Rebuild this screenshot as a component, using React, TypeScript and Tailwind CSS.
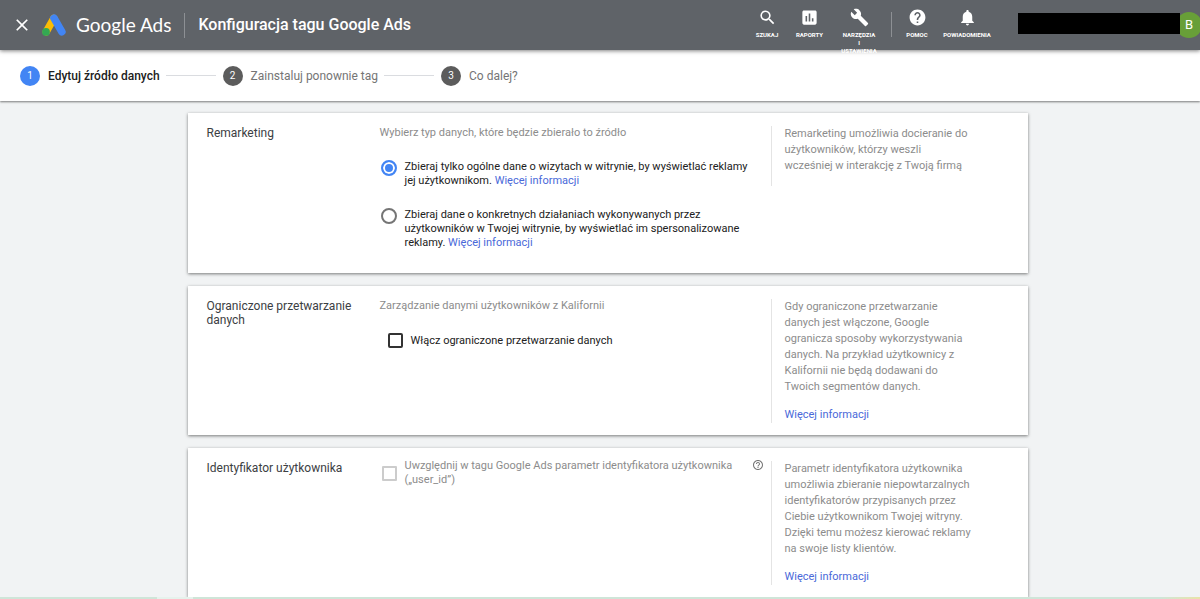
import type { ReactNode } from 'react';
import {
  MdAssessment,
  MdBuild,
  MdClose,
  MdHelp,
  MdHelpOutline,
  MdNotifications,
  MdSearch,
} from 'react-icons/md';

const steps = ['Edytuj źródło danych', 'Zainstaluj ponownie tag', 'Co dalej?'];

function AdsLogo() {
  return (
    <svg viewBox="0 0 24 22" className="h-[22px] w-6" aria-hidden="true">
      <path d="M4.2 17.8 11.8 4.4" stroke="#fbbc04" strokeWidth="7.4" strokeLinecap="round" />
      <path d="M12 4.2 19.9 17.8" stroke="#4285f4" strokeWidth="7.6" strokeLinecap="round" />
      <circle cx="4" cy="17.9" r="3.9" fill="#34a853" />
    </svg>
  );
}

function ToolButton({ icon, label, className }: { icon: ReactNode; label: string; className: string }) {
  return (
    <button
      type="button"
      className={`flex flex-col items-center gap-1 text-center text-[6px] leading-[8px] font-bold uppercase ${className}`}
    >
      {icon}
      <span>{label}</span>
    </button>
  );
}

function Link({ children }: { children: ReactNode }) {
  return (
    <a href="#" className="text-[#4a69d9]">
      {children}
    </a>
  );
}

function Card({ title, side, more, children }: { title: string; side: string; more?: boolean; children: ReactNode }) {
  return (
    <section className="grid grid-cols-[173px_1fr_257px] bg-white pt-[13px] pb-3 pl-[19px] shadow-[0_1px_3px_rgba(0,0,0,0.5)]">
      <h2 className="pr-5 text-[12px] leading-[14px] text-[#3c4043]">{title}</h2>
      <div className="text-[11px] leading-[14px] text-[#212121]">{children}</div>
      <aside className="min-h-[60px] self-start border-l border-[#e4e4e4] pl-[13px] text-[11px] leading-[16px] text-[#8c8c8c]">
        <p className="w-[187px]">{side}</p>
        {more && (
          <p className="pt-3">
            <Link>Więcej informacji</Link>
          </p>
        )}
      </aside>
    </section>
  );
}

const radioClass =
  'size-4 shrink-0 appearance-none rounded-full border-2 border-[#757575] bg-white checked:border-[#4285f4] checked:bg-[#4285f4] checked:shadow-[inset_0_0_0_2px_white]';

export default function App() {
  return (
    <div className="flex min-h-screen flex-col overflow-x-clip bg-[#f1f3f4] font-['Roboto',sans-serif]">
      <header className="relative z-10 flex h-[50px] items-center bg-[#5f6368] text-white shadow-[0_1px_4px_rgba(0,0,0,0.5)]">
        <button type="button" aria-label="Zamknij" className="ml-3">
          <MdClose className="size-5" />
        </button>
        <div className="ml-[10px] flex items-center gap-[10px]">
          <AdsLogo />
          <span className="font-['Lato',sans-serif] text-[19px] leading-6">Google Ads</span>
        </div>
        <div className="ml-[13px] h-[25px] w-px bg-[#8d9094]" />
        <h1 className="ml-[13px] text-[16px] leading-6 font-medium">Konfiguracja tagu Google Ads</h1>

        <nav className="ml-auto flex items-start self-start pt-2">
          <ToolButton icon={<MdSearch className="size-[19px]" />} label="Szukaj" className="w-10" />
          <ToolButton icon={<MdAssessment className="size-[19px]" />} label="Raporty" className="w-[45px]" />
          <ToolButton icon={<MdBuild className="size-[19px]" />} label="Narzędzia i ustawienia" className="w-[54px] px-2.5" />
          <div className="mt-1 mr-[2px] ml-[5px] h-[25px] w-px bg-[#8d9094]" />
          <ToolButton icon={<MdHelp className="size-[19px]" />} label="Pomoc" className="w-[46px]" />
          <ToolButton icon={<MdNotifications className="size-[19px]" />} label="Powiadomienia" className="w-[54px]" />
        </nav>
        <div className="z-10 mb-1 ml-6 h-[21px] w-[162px] bg-black" />
        <div className="-mr-0.5 -ml-1 flex size-[26px] items-center justify-center rounded-full bg-[#689f38] text-[13px]">
          B
        </div>
      </header>

      <ol className="flex h-[51px] items-center bg-white pl-5 text-[12px] shadow-[0_1px_2px_rgba(0,0,0,0.5)]">
        {steps.map((step, i) => (
          <li key={step} className="flex items-center">
            {i > 0 && <span className="mr-[7px] ml-[6px] h-px w-[50px] bg-[#dadce0]" />}
            <span
              className={`flex size-5 items-center justify-center rounded-full text-[10px] text-white ${
                i === 0 ? 'bg-[#4285f4]' : 'bg-[#5c5c5c]'
              }`}
            >
              {i + 1}
            </span>
            <span className={`ml-2 ${i === 0 ? 'font-medium text-[#212121]' : 'text-[#757575]'}`}>{step}</span>
          </li>
        ))}
      </ol>

      <main className="flex grow flex-col pt-3 pl-[15px]">
        <form className="mx-auto flex w-full max-w-[840px] flex-col gap-[13px]">
          <Card
            title="Remarketing"
            side="Remarketing umożliwia docieranie do użytkowników, którzy weszli wcześniej w interakcję z Twoją firmą"
          >
            <p className="text-[#8c8c8c]">Wybierz typ danych, które będzie zbierało to źródło</p>
            <label className="mt-5 flex gap-2 pl-px">
              <input type="radio" name="mode" defaultChecked className={radioClass} />
              <span className="w-[354px]">
                Zbieraj tylko ogólne dane o wizytach w witrynie, by wyświetlać reklamy jej użytkownikom.{' '}
                <Link>Więcej informacji</Link>
              </span>
            </label>
            <label className="mt-5 mb-[11px] flex gap-2 pl-px">
              <input type="radio" name="mode" className={radioClass} />
              <span className="w-[354px]">
                Zbieraj dane o konkretnych działaniach wykonywanych przez użytkowników w Twojej witrynie, by
                wyświetlać im spersonalizowane reklamy. <Link>Więcej informacji</Link>
              </span>
            </label>
          </Card>

          <Card
            title="Ograniczone przetwarzanie danych"
            side="Gdy ograniczone przetwarzanie danych jest włączone, Google ogranicza sposoby wykorzystywania danych. Na przykład użytkownicy z Kalifornii nie będą dodawani do Twoich segmentów danych."
            more
          >
            <p className="text-[#8c8c8c]">Zarządzanie danymi użytkowników z Kalifornii</p>
            <label className="mt-5 flex items-center gap-2 pl-2">
              <input
                type="checkbox"
                className="size-[15px] appearance-none rounded-[2px] border-2 border-[#333] checked:bg-[#4285f4]"
              />
              Włącz ograniczone przetwarzanie danych
            </label>
          </Card>

          <Card
            title="Identyfikator użytkownika"
            side="Parametr identyfikatora użytkownika umożliwia zbieranie niepowtarzalnych identyfikatorów przypisanych przez Ciebie użytkownikom Twojej witryny. Dzięki temu możesz kierować reklamy na swoje listy klientów."
            more
          >
            <div className="-mt-0.5 flex justify-between pr-[7px]">
              <label className="flex items-center gap-2 pl-[2px] text-[#8c8c8c]">
                <input
                  type="checkbox"
                  disabled
                  className="size-[15px] shrink-0 appearance-none rounded-[1px] border-2 border-[#ccc]"
                />
                <span className="w-[340px]">
                  Uwzględnij w tagu Google Ads parametr identyfikatora użytkownika („user_id”)
                </span>
              </label>
              <MdHelpOutline className="size-3 shrink-0 text-[#757575]" />
            </div>
          </Card>
        </form>
      </main>
      <div className="relative flex h-[2px] bg-[#cfe5d8]">
        <div className="ml-[157px] w-9 bg-[#e6f2ec]" />
        <div className="ml-auto w-10 bg-linear-to-r from-[#cfe5d8] to-[#e8e3a8]" />
      </div>
    </div>
  );
}
